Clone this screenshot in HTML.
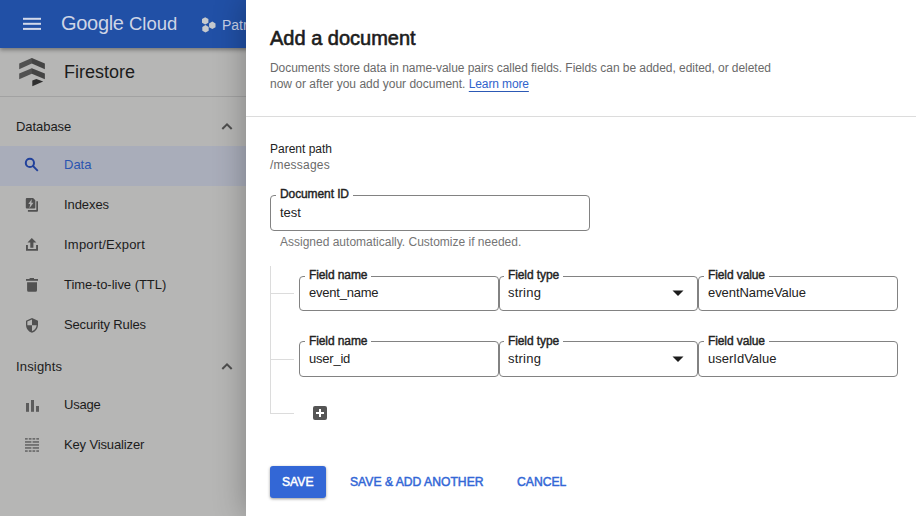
<!DOCTYPE html>
<html><head><meta charset="utf-8">
<style>
*{box-sizing:border-box;margin:0;padding:0}
html,body{width:916px;height:516px;overflow:hidden;background:#b6b6b5;font-family:"Liberation Sans",sans-serif;}
body{position:relative}
.abs{position:absolute}
#hdr{left:0;top:0;width:916px;height:48px;background:#2150a6;box-shadow:0 2px 4px rgba(0,0,0,.35);z-index:2}
#side{left:0;top:48px;width:256px;height:468px;background:#b6b6b5;z-index:1}
.t{position:absolute;white-space:nowrap;line-height:1}
#panel{left:246px;top:0;width:670px;height:516px;background:#fff;z-index:5;box-shadow:0 0 30px rgba(0,0,0,.3)}
.fld{position:absolute;border:1px solid #828282;border-radius:4px;background:#fff}
.lbl{position:absolute;top:-9px;left:5px;background:#fff;padding:0 4px 0 4px;letter-spacing:-0.1px;font-size:12px;font-weight:normal;-webkit-text-stroke:0.4px #222;color:#222;line-height:14px;white-space:nowrap}
.val{position:absolute;left:9px;top:9px;font-size:13px;color:#222;line-height:15px;white-space:nowrap}
.v2{top:8px}
.ft .lbl{left:4px}.ft .val{left:8px}
.btn{transform:scaleX(0.935);transform-origin:0 0}
.l3{top:-8px}.v3{top:9px}
</style></head><body>
<div id="hdr" class="abs">
  <svg class="abs" style="left:0;top:0" width="246" height="48" viewBox="0 0 246 48"><g fill="#d3d9ea"><rect x="23" y="17.800" width="18" height="2"/><rect x="23" y="22.800" width="18" height="2"/><rect x="23" y="27.900" width="18" height="2"/></g><g fill="#c6c9cd"><path d="M205.200 17.200l3.200 1.850v3.700l-3.200 1.850l-3.200-1.850v-3.700z"/><path d="M212.300 21.600l3.200 1.850v3.700l-3.200 1.850l-3.200-1.850v-3.700z"/><path d="M205.500 25.100l3.200 1.850v3.700l-3.200 1.850l-3.200-1.850v-3.700z"/></g></svg>
  <div class="t" style="left:61px;top:13px;font-size:20px;color:#cfd5e5;letter-spacing:-0.3px">Google</div>
  <div class="t" id="cloud" style="left:129px;top:14.500px;font-size:18.500px;color:#cfd5e5;letter-spacing:0px">Cloud</div>
  <div class="t" style="left:222px;top:17.500px;font-size:14px;color:#c9d1e6">Patr</div>
</div>
<div id="side" class="abs">
  <svg class="abs" style="left:0;top:0" width="64" height="48" viewBox="0 48 64 48"><path d="M19.2 63.5L31.8 58h.3v5.5h-.3L19.2 69.2z" fill="#515151"/><path d="M31.8 58L44.9 63.5v5.7L31.8 63.5z" fill="#444"/><path d="M19.2 73.6L31.8 68.2h.3v5.5h-.3L19.2 79.3z" fill="#515151"/><path d="M31.8 68.2L44.9 73.6v5.7L31.8 73.7z" fill="#444"/><path d="M32.3 80.6L36.4 79l6.8 2.5L32.3 86.3z" fill="#2f2f2f"/></svg>
  <div class="t" style="left:64px;top:15px;font-size:18px;color:#1c1c1c">Firestore</div>
  <div class="abs" style="left:0;top:48px;width:256px;height:1px;background:#a2a2a2"></div>
  <div class="t" style="left:16px;top:72px;font-size:13px;color:#1c1c1c;letter-spacing:-0.06px">Database</div>
  <div class="abs" style="left:0;top:97.500px;width:256px;height:40px;background:#a9adba"></div>
  <div class="t" style="left:64px;top:110px;font-size:13px;color:#2b55b0">Data</div>
  <div class="t" style="left:64px;top:150px;font-size:13px;color:#1c1c1c;letter-spacing:-0.08px">Indexes</div>
  <div class="t" style="left:64px;top:190px;font-size:13px;color:#1c1c1c;letter-spacing:0.23px">Import/Export</div>
  <div class="t" style="left:64px;top:230px;font-size:13px;color:#1c1c1c;letter-spacing:-0.03px">Time-to-live (TTL)</div>
  <div class="t" style="left:64px;top:270px;font-size:13px;color:#1c1c1c;letter-spacing:-0.14px">Security Rules</div>
  <div class="t" style="left:16px;top:312px;font-size:13px;color:#1c1c1c;letter-spacing:0.17px">Insights</div>
  <div class="t" style="left:64px;top:350px;font-size:13px;color:#1c1c1c;letter-spacing:-0.2px">Usage</div>
  <div class="t" style="left:64px;top:390px;font-size:13px;color:#1c1c1c;letter-spacing:-0.14px">Key Visualizer</div>
  <svg class="abs" style="left:0;top:0" width="256" height="468" viewBox="0 48 256 468">
    <!-- search -->
    <circle cx="29.900" cy="162.900" r="4.100" fill="none" stroke="#21419b" stroke-width="2"/><path d="M33 166l4.800 4.800" stroke="#21419b" stroke-width="1.800" fill="none"/>
    <!-- indexes -->
    <g fill="#515151"><path d="M26.8 198h6.3l2.2 2.2v7.4a1 1 0 0 1-1 1h-7.500a1 1 0 0 1-1-1v-8.600a1 1 0 0 1 1-1z"/><path d="M36.300 201.200h1.700v9.600a1 1 0 0 1-1 1h-9.100v-1.700h8.400z"/></g>
    <path d="M31.800 199.100L28.300 204.100h1.900L29.400 208.300 33.500 202.700h-2.100z" fill="#b0b0b0"/>
    <!-- upload -->
    <g fill="#515151"><path d="M31.800 238l4.600 4.600h-3v5.200h-3.100v-5.200h-2.800z"/><path d="M26 245h1.900v4.100h8.200V245H38v5.700H26z"/></g>
    <!-- trash -->
    <g fill="#515151"><rect x="26" y="279" width="12" height="1.800"/><rect x="29.600" y="278" width="4.400" height="1.500"/><path d="M27.100 282.200h9.900v8.100a1.500 1.500 0 0 1-1.500 1.500h-6.900a1.500 1.500 0 0 1-1.500-1.500z"/></g>
    <!-- shield -->
    <g transform="translate(24,317.300) scale(0.6667)" fill="#515151"><path d="M12 1L3 5v6c0 5.550 3.840 10.740 9 12 5.160-1.260 9-6.450 9-12V5l-9-4zm0 10.990h7c-.53 4.120-3.280 7.790-7 8.940V12H5V6.300l7-3.110v8.800z"/></g>
    <!-- usage -->
    <g fill="#5c5c5c"><rect x="26" y="403" width="3" height="8.800"/><rect x="31" y="400" width="3" height="11.800"/><rect x="36" y="406" width="3" height="5.800"/></g>
    <!-- key visualizer -->
    <g fill="#6c6c6c">
      <rect x="25" y="438" width="2.700" height="1.700"/><rect x="28.800" y="438" width="2.700" height="1.700"/><rect x="32.500" y="438" width="2.700" height="1.700"/><rect x="36.300" y="438" width="2.700" height="1.700"/>
      <rect x="25" y="441.100" width="6.400" height="1.700"/><rect x="32.600" y="441.100" width="6.400" height="1.700"/>
      <rect x="25" y="444.100" width="14" height="1.700"/>
      <rect x="25" y="447.100" width="6.400" height="1.700"/><rect x="32.600" y="447.100" width="6.400" height="1.700"/>
      <rect x="25" y="450.200" width="2.700" height="1.700"/><rect x="28.800" y="450.200" width="2.700" height="1.700"/><rect x="32.500" y="450.200" width="2.700" height="1.700"/><rect x="36.300" y="450.200" width="2.700" height="1.700"/>
    </g>
    <!-- chevrons -->
    <path d="M222.300 129L227 124.300l4.700 4.700" fill="none" stroke="#4e4e4e" stroke-width="2"/>
    <path d="M222.300 369L227 364.300l4.700 4.700" fill="none" stroke="#4e4e4e" stroke-width="2"/>
  </svg>
</div>
<div id="panel" class="abs">
  <div class="t" style="left:24px;top:28px;font-size:20px;-webkit-text-stroke:0.6px #1c1c1c;color:#1c1c1c">Add a document</div>
  <div class="t" style="left:24px;top:62px;font-size:12px;color:#6a6a6a;letter-spacing:-0.05px">Documents store data in name-value pairs called fields. Fields can be added, edited, or deleted</div>
  <div class="t" style="left:24px;top:78px;font-size:12px;color:#6a6a6a">now or after you add your document. <span style="color:#3063cc;text-decoration:underline;text-underline-offset:2.500px;text-decoration-thickness:1px;text-decoration-color:#2c59b5;letter-spacing:-0.13px">Learn more</span></div>
  <div class="abs" style="left:0;top:116px;width:670px;height:1px;background:#dcdcdc"></div>
  <div class="t" style="left:24px;top:143px;font-size:12px;color:#222">Parent path</div>
  <div class="t" style="left:24px;top:159px;font-size:12px;color:#6a6a6a;letter-spacing:0.2px">/messages</div>
  <div class="fld" style="left:24px;top:195px;width:320px;height:36px"><div class="lbl">Document ID</div><div class="val">test</div></div>
  <div class="t" style="left:34px;top:236px;font-size:12px;color:#757575">Assigned automatically. Customize if needed.</div>

  <div class="abs" style="left:24px;top:266px;width:1px;height:148px;background:#dcdcdc"></div>
  <div class="abs" style="left:24px;top:293px;width:24px;height:1px;background:#dcdcdc"></div>
  <div class="abs" style="left:24px;top:359px;width:24px;height:1px;background:#dcdcdc"></div>
  <div class="abs" style="left:24px;top:413px;width:24px;height:1px;background:#dcdcdc"></div>

  <div class="fld" style="left:53px;top:276px;width:200px;height:35px"><div class="lbl l2">Field name</div><div class="val v2" style="letter-spacing:-0.22px">event_name</div></div>
  <div class="fld ft" style="left:253px;top:276px;width:199px;height:35px"><div class="lbl l2">Field type</div><div class="val v2" style="letter-spacing:0.22px">string</div></div>
  <div class="fld" style="left:452px;top:276px;width:200px;height:35px"><div class="lbl l2">Field value</div><div class="val v2" style="letter-spacing:-0.06px">eventNameValue</div></div>
  <div class="fld" style="left:53px;top:341px;width:200px;height:36px"><div class="lbl l3">Field name</div><div class="val v3" style="letter-spacing:-0.22px">user_id</div></div>
  <div class="fld ft" style="left:253px;top:341px;width:199px;height:36px"><div class="lbl l3">Field type</div><div class="val v3" style="letter-spacing:0.22px">string</div></div>
  <div class="fld" style="left:452px;top:341px;width:200px;height:36px"><div class="lbl l3">Field value</div><div class="val v3">userIdValue</div></div>
  <svg class="abs" style="left:426px;top:290px" width="12" height="6" viewBox="0 0 12 6"><path d="M0.5 0.5h11L6 6z" fill="#1c1c1c"/></svg>
  <svg class="abs" style="left:426px;top:356px" width="12" height="6" viewBox="0 0 12 6"><path d="M0.5 0.5h11L6 6z" fill="#1c1c1c"/></svg>
  <svg class="abs" style="left:67px;top:406px" width="14" height="14" viewBox="0 0 14 14"><rect width="14" height="14" rx="2" fill="#555"/><path d="M7 3v8M3 7h8" stroke="#fff" stroke-width="2"/></svg>

  <div class="abs" style="left:24px;top:466px;width:56px;height:32px;background:#3367d6;border-radius:3px;box-shadow:0 1px 3px rgba(0,0,0,.4)"></div>
  <div class="t btn" style="left:36px;top:475px;font-size:13px;-webkit-text-stroke:0.5px #fff;color:#fff">SAVE</div>
  <div class="t btn" style="left:104px;top:475px;font-size:13px;-webkit-text-stroke:0.5px #3367d6;color:#3367d6">SAVE &amp; ADD ANOTHER</div>
  <div class="t btn" style="left:270.500px;top:475px;font-size:13px;-webkit-text-stroke:0.5px #3367d6;color:#3367d6">CANCEL</div>
</div>
</body></html>
